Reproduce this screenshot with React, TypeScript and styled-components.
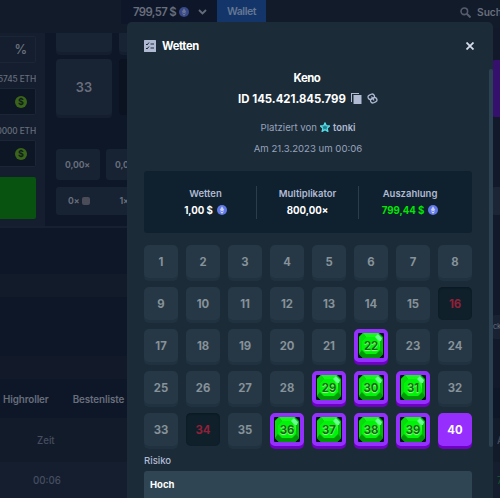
import styled, { createGlobalStyle, css } from 'styled-components';

import { ReactElement } from 'react';

const GlobalStyle = createGlobalStyle`
  * {
    box-sizing: border-box;
  }
  body {
    margin: 0;
    background: #0e1728;
    font-family: Inter, 'Liberation Sans', sans-serif;
    overflow: hidden;
  }
  svg {
    flex-shrink: 0;
  }
`;

const PageDiv = styled.div`
  position: relative;
  width: 500px;
  height: 498px;
  overflow: hidden;
  color: #686e7c;
  white-space: nowrap;
`;

const TopBar = styled.header`
  display: flex;
  height: 33px;
  padding-left: 121px;
  background: #121b2a;
  font-size: 11.3px;
  font-weight: 600;
`;

const BalanceDiv = styled.div`
  display: flex;
  flex-shrink: 0;
  align-items: center;
  width: 96px;
  height: 24px;
  padding-left: 12px;
  background: #0e1729;
  letter-spacing: -0.6px;

  > svg:first-of-type {
    margin: 0 9px 0 3px;
    opacity: 0.5;
  }
`;

const WalletButton = styled.div`
  flex-shrink: 0;
  width: 49px;
  height: 24px;
  background: #13356a;
  color: #657793;
  font-size: 10.6px;
  line-height: 24px;
  text-align: center;
  letter-spacing: -0.5px;
`;

const SearchDiv = styled.div`
  display: flex;
  flex-shrink: 0;
  align-items: center;
  gap: 6px;
  height: 24px;
  margin-left: 194px;
  font-size: 10.2px;
`;

const GameDiv = styled.div`
  display: flex;
  height: 195px;
  border-bottom: 2px solid #162031;
`;

const SidebarDiv = styled.div`
  display: flex;
  flex-direction: column;
  align-items: flex-start;
  width: 45px;
  padding-top: 3px;
  background: #141e2e;
`;

const FieldDiv = styled.div<{ $plain?: boolean }>`
  display: flex;
  align-items: center;
  justify-content: flex-end;
  width: 36px;
  height: 27px;
  padding-right: 8px;
  border: 1px solid #1a2536;
  border-left: 0;
  border-radius: 0 2px 2px 0;
  background: ${({ $plain }) => ($plain ? '#141e2e' : '#0d1625')};
  font-size: 12.5px;
  font-weight: 600;
`;

const FieldLabel = styled.div`
  display: flex;
  justify-content: flex-end;
  width: 36px;
  height: 25px;
  padding-top: 10px;
  font-size: 8.3px;
  font-weight: 500;
  line-height: 12px;
  letter-spacing: -0.1px;
`;

const CoinSpan = styled.span`
  width: 12px;
  height: 12px;
  border-radius: 50%;
  background: #3a6619;
  color: #101d20;
  font-size: 9px;
  font-weight: 700;
  line-height: 12px;
  text-align: center;
`;

const BetButton = styled.div`
  width: 36px;
  height: 42px;
  margin-top: 10px;
  border-radius: 0 2px 2px 0;
  background: #07530f;
`;

const BoardDiv = styled.div`
  flex: 1;
  padding-left: 11px;
  overflow: hidden;
`;

const BoardRow = styled.div<{ $gap: number; $top?: number }>`
  display: flex;
  gap: ${({ $gap }) => $gap}px;
  margin-top: ${({ $top = 0 }) => $top}px;
`;

const BoardTile = styled.div<{ $height?: number; $dark?: boolean }>`
  display: flex;
  align-items: center;
  justify-content: center;
  width: 56px;
  height: ${({ $height = 56 }) => $height}px;
  margin-bottom: 3px;
  border-radius: ${({ $height }) => ($height ? '0 0 4px 4px' : '4px')};
  background: ${({ $dark }) => ($dark ? '#0b1321' : '#182333')};
  box-shadow: ${({ $dark }) => ($dark ? 'none' : '0 3px 0 #141e2f')};
  font-size: 12.8px;
  font-weight: 600;
`;

const OddsDiv = styled.div<{ $width: number; $height: number }>`
  display: flex;
  align-items: center;
  gap: 3px;
  width: ${({ $width }) => $width}px;
  height: ${({ $height }) => $height}px;
  padding-left: ${({ $width }) => ($width > 50 ? 12 : 9)}px;
  border-radius: 3px;
  background: #172232;
  font-size: 8.6px;
  font-weight: 700;
  letter-spacing: -0.1px;
`;

const GemSpan = styled.span`
  width: 8px;
  height: 8px;
  margin-right: 26px;
  border-radius: 2px;
  background: #4a4c58;
`;

const Band = styled.div<{ $height: number; $color?: string }>`
  height: ${({ $height }) => $height}px;
  background: ${({ $color = '#0e1728' }) => $color};
`;

const TabsDiv = styled.div`
  display: flex;
  gap: 24px;
  height: 39px;
  padding-left: 3px;
  font-size: 9.8px;
  font-weight: 600;
  line-height: 41px;
  letter-spacing: -0.08px;
`;

const TableRow = styled.div<{ $height: number; $color: string; $won?: boolean }>`
  display: flex;
  justify-content: space-between;
  height: ${({ $height }) => $height}px;
  padding-left: ${({ $won }) => ($won ? 33 : 37)}px;
  background: ${({ $color }) => $color};
  color: #464d60;
  font-size: 9.7px;
  font-weight: 500;
  line-height: ${({ $height }) => $height + 2}px;

  > :last-child {
    width: 3px;
    color: ${({ $won }) => ($won ? '#10552a' : '#464d60')};
  }
`;

// pieces of the page that stay visible to the right of the dialog
const EdgeDiv = styled.div`
  position: absolute;
  top: 28px;
  right: 0;
  width: 8px;
  height: 360px;
  background: #11192a;
`;

const EdgeBlock = styled.div<{ $height: number; $top: number; $color: string }>`
  height: ${({ $height }) => $height}px;
  margin-top: ${({ $top }) => $top}px;
  padding-left: 1px;
  border-radius: 3px 0 0 3px;
  background: ${({ $color }) => $color};
  font-size: 7.5px;
  line-height: ${({ $height }) => $height}px;
  letter-spacing: -0.3px;
`;

const DialogDiv = styled.div`
  position: absolute;
  top: 22px;
  left: 127px;
  width: 366px;
  height: 476px;
  padding: 0 21px 0 17px;
  border-radius: 5px 5px 0 0;
  background: #1b2c38;
  color: #fff;
`;

const ScrollThumb = styled.div`
  position: absolute;
  top: 47px;
  right: 0;
  width: 4px;
  height: 378px;
  border-radius: 2px;
  background: #2c4252;
`;

const DialogHeader = styled.div`
  display: flex;
  align-items: center;
  height: 48px;
  font-size: 11.2px;
  font-weight: 700;

  > svg:last-child {
    margin: 0 -2px 0 auto;
  }
`;

const TitleSpan = styled.span`
  margin-left: 6px;
  letter-spacing: -0.35px;
`;

const SummaryDiv = styled.div`
  display: flex;
  flex-direction: column;
  align-items: center;
  height: 101px;
`;

const GameTitle = styled.div`
  height: 17px;
  margin-right: 2px;
  font-size: 11.4px;
  font-weight: 700;
  line-height: 17px;
  letter-spacing: -0.45px;
`;

const BetId = styled.div`
  display: flex;
  align-items: center;
  height: 22px;
  padding-top: 1px;
  font-size: 11.4px;
  font-weight: 700;

  > svg {
    margin-left: 5px;
  }
`;

const MetaDiv = styled.div<{ $top: number }>`
  display: flex;
  align-items: center;
  height: 14px;
  margin-top: ${({ $top }) => $top}px;
  color: #98a2bd;
  font-size: 9.6px;

  > svg {
    margin: 0 3px;
  }
`;

const UserSpan = styled.span`
  color: #b1bad3;
  font-weight: 600;
  font-size: 9.4px;
`;

const StatsDiv = styled.div`
  display: flex;
  align-items: center;
  height: 62px;
  border-radius: 3px;
  background: #0f212e;
`;

const StatDiv = styled.div<{ $width: number }>`
  display: flex;
  flex-direction: column;
  align-items: center;
  justify-content: center;
  width: ${({ $width }) => $width}px;
  height: 33px;
  border-left: ${({ $width }) => ($width === 112 ? 0 : 1)}px solid #2b3d4a;
  padding-left: ${({ $width }) => ($width === 112 ? 11 : 0)}px;
  padding-right: ${({ $width }) => ($width > 112 ? 11 : 0)}px;
`;

const StatLabel = styled.div`
  color: #b1bad3;
  font-size: 9.5px;
  font-weight: 600;
  line-height: 16px;
`;

const StatValue = styled.div<{ $won?: boolean }>`
  display: flex;
  align-items: center;
  gap: 4px;
  height: 19px;
  color: ${({ $won }) => ($won ? '#00e701' : '#fff')};
  font-size: 9.7px;
  font-weight: 700;
  letter-spacing: -0.05px;
`;

const GridDiv = styled.div`
  display: grid;
  grid-template-columns: repeat(8, 34px);
  grid-auto-rows: 34px;
  gap: 8px;
  margin-top: 12px;
`;

type TileKind = 'idle' | 'miss' | 'hit' | 'picked';

const tileStyles = {
  idle: css`
    background: #263845;
    box-shadow: 0 3px 0 #20323f;
    color: #87929a;
  `,
  miss: css`
    background: #0f202b;
    box-shadow: inset 0 1px 2px #0a1822;
    color: #912039;
  `,
  hit: css`
    border: 4px solid #9430fc;
    background: #04141e;
    box-shadow: 0 3px 0 #7100c7;
    color: #116813;
    text-shadow: 0 1px 1px #b0ff9c;
  `,
  picked: css`
    background: #962efe;
    box-shadow: 0 3px 0 #7100c7;
    color: #fff;
  `,
};

const TileDiv = styled.div<{ $kind: TileKind }>`
  display: flex;
  position: relative;
  align-items: center;
  justify-content: center;
  height: 33px;
  border-radius: 5px;
  font-size: 11.3px;
  font-weight: 700;
  ${({ $kind }) => tileStyles[$kind]}

  > svg {
    position: absolute;
    top: 0;
    left: 1px;
  }
  > span {
    position: relative;
  }
`;

const RiskLabel = styled.div`
  height: 19px;
  margin-top: 5px;
  color: #b1bad3;
  font-size: 9.6px;
  font-weight: 500;
  line-height: 18px;
`;

const RiskSelect = styled.div`
  height: 30px;
  padding-left: 6px;
  border-radius: 3px 3px 0 0;
  background: #2f4553;
  font-size: 9.5px;
  font-weight: 700;
  line-height: 28px;
`;

function EthIcon(): ReactElement {
  return (
    <svg width="10" height="10" viewBox="0 0 20 20">
      <circle cx="10" cy="10" r="10" fill="#6179e8" />
      <path d="M10 2.5 5.5 10.2 10 13Z" fill="#c4cefa" />
      <path d="M10 2.5 14.5 10.2 10 13Z" fill="#fff" opacity=".65" />
      <path d="M5.5 11.8 10 17.5 14.5 11.8 10 14.5Z" fill="#dce3ff" />
    </svg>
  );
}

function ListIcon(): ReactElement {
  return (
    <svg width="12" height="12" viewBox="0 0 24 24">
      <rect width="24" height="24" rx="1" fill="#b1bad3" />
      <g fill="none" stroke="#1b2c38" strokeWidth="2">
        <path d="m4 8 2 2 4-5M4 16l2 2 4-5M13 8h7M13 16h7" />
      </g>
    </svg>
  );
}

function CopyIcon(): ReactElement {
  return (
    <svg width="11" height="11" viewBox="0 0 22 22" fill="#b1bad3">
      <path d="M0 0h16v2H2v16H0Z" />
      <rect x="5" y="4" width="16" height="18" />
    </svg>
  );
}

function LinkIcon(): ReactElement {
  return (
    <svg width="11" height="11" viewBox="0 0 22 22" fill="none" stroke="#b1bad3" strokeWidth="2.5">
      <rect x="2" y="3" width="13" height="9" rx="4.500" transform="rotate(-25 8.500 7.500)" />
      <rect x="7" y="10" width="13" height="9" rx="4.500" transform="rotate(-25 13.500 14.500)" />
      <path d="m9 7 5 8" />
    </svg>
  );
}

function StarIcon(): ReactElement {
  return (
    <svg width="10" height="10" viewBox="0 0 24 24">
      <path
        d="m12 2 3 7 8 .5-6 5.5 2 7.5-7-4-7 4L7 15 1 9.500l8-.5Z"
        fill="#2a9aab"
        stroke="#57dce5"
        strokeWidth="3"
        strokeLinejoin="round"
      />
      <path d="M9 11v5M12 10v6M15 11v5" stroke="#1a5366" strokeWidth="1.5" />
    </svg>
  );
}

function GemIcon(): ReactElement {
  return (
    <svg width="24" height="25" viewBox="0 0 24 25">
      <path d="M4 0h16l4 4v17l-4 4H4l-4-4V4Z" fill="#00bd08" />
      <path d="M4 0h16l-3 4H7Z" fill="#18f71b" />
      <path d="m0 4 4-4 3 4-4 4v9l-3 4Z" fill="#08dd0c" />
      <path d="m0 21 3-4 4 4h10l4-4 3 4-4 4H4Z" fill="#009a08" />
      <path d="M7 4h10l4 4v9l-4 4H7l-4-4V8Z" fill="#00f408" />
      <path d="m17 4 4 4v7Z" fill="#29ff27" />
      <path d="m19 1 4 4-1 3h-2l-4-4Z" fill="#6bff93" />
    </svg>
  );
}

const hits = [22, 29, 30, 31, 36, 37, 38, 39];
const misses = [16, 34];

function getKind(n: number): TileKind {
  if (hits.includes(n)) return 'hit';
  if (misses.includes(n)) return 'miss';
  return n === 40 ? 'picked' : 'idle';
}

function Tile({ n }: { n: number }): ReactElement {
  const kind = getKind(n);
  return (
    <TileDiv $kind={kind}>
      {kind === 'hit' && <GemIcon />}
      <span>{n}</span>
    </TileDiv>
  );
}

function Background(): ReactElement {
  return (
    <>
      <TopBar>
        <BalanceDiv>
          799,57 $
          <EthIcon />
          <svg width="9" height="6" viewBox="0 0 9 6" fill="none" stroke="#646b79" strokeWidth="1.8">
            <path d="m1 1 3.500 3.500L8 1" />
          </svg>
        </BalanceDiv>
        <WalletButton>Wallet</WalletButton>
        <SearchDiv>
          <svg width="11" height="11" viewBox="0 0 11 11" fill="none" stroke="#555c6b">
            <circle cx="4.300" cy="4.300" r="3.300" strokeWidth="1.600" />
            <path d="m6.500 6.500 4 4" strokeWidth="2" />
          </svg>
          Suche
        </SearchDiv>
      </TopBar>
      <GameDiv>
        <SidebarDiv>
          <FieldDiv $plain>%</FieldDiv>
          <FieldLabel>5745 ETH</FieldLabel>
          <FieldDiv>
            <CoinSpan>$</CoinSpan>
          </FieldDiv>
          <FieldLabel>0000 ETH</FieldLabel>
          <FieldDiv>
            <CoinSpan>$</CoinSpan>
          </FieldDiv>
          <BetButton />
        </SidebarDiv>
        <BoardDiv>
          <BoardRow $gap={7}>
            <BoardTile $height={19} />
            <BoardTile $height={19} />
          </BoardRow>
          <BoardRow $gap={7} $top={4}>
            <BoardTile>33</BoardTile>
            <BoardTile $dark />
          </BoardRow>
          <BoardRow $gap={6} $top={31}>
            <OddsDiv $width={44} $height={31}>0,00×</OddsDiv>
            <OddsDiv $width={44} $height={31}>0,00×</OddsDiv>
          </BoardRow>
          <BoardRow $gap={0} $top={7}>
            <OddsDiv $width={300} $height={28}>
              0×
              <GemSpan />
              1×
            </OddsDiv>
          </BoardRow>
        </BoardDiv>
      </GameDiv>
      <Band $height={46} />
      <Band $height={23} $color="#121b29" />
      <Band $height={59} />
      <Band $height={23} $color="#121a29" />
      <TabsDiv>
        <span>Highroller</span>
        <span>Bestenliste</span>
      </TabsDiv>
      <TableRow $height={44} $color="#121b2a">
        <span>Zeit</span>
        <span>A</span>
      </TableRow>
      <TableRow $height={36} $color="#141e2f" $won>
        <span>00:06</span>
        <span>7</span>
      </TableRow>
      <EdgeDiv>
        <EdgeBlock $height={57} $top={32} $color="#35106c" />
        <EdgeBlock $height={28} $top={70} $color="#1b2536" />
        <EdgeBlock $height={24} $top={100} $color="#182233">ck</EdgeBlock>
      </EdgeDiv>
    </>
  );
}

export default function App(): ReactElement {
  return (
    <PageDiv>
      <GlobalStyle />
      <Background />
      <DialogDiv>
        <ScrollThumb />
        <DialogHeader>
          <ListIcon />
          <TitleSpan>Wetten</TitleSpan>
          <svg width="8" height="8" viewBox="0 0 8 8" stroke="#d5dceb" strokeWidth="1.800">
            <path d="m.5.5 7 7M7.500.5l-7 7" />
          </svg>
        </DialogHeader>
        <SummaryDiv>
          <GameTitle>Keno</GameTitle>
          <BetId>
            ID 145.421.845.799
            <CopyIcon />
            <LinkIcon />
          </BetId>
          <MetaDiv $top={11}>
            Platziert von
            <StarIcon />
            <UserSpan>tonki</UserSpan>
          </MetaDiv>
          <MetaDiv $top={7}>Am 21.3.2023 um 00:06</MetaDiv>
        </SummaryDiv>
        <StatsDiv>
          <StatDiv $width={112}>
            <StatLabel>Wetten</StatLabel>
            <StatValue>
              1,00 $
              <EthIcon />
            </StatValue>
          </StatDiv>
          <StatDiv $width={102}>
            <StatLabel>Multiplikator</StatLabel>
            <StatValue>800,00×</StatValue>
          </StatDiv>
          <StatDiv $width={114}>
            <StatLabel>Auszahlung</StatLabel>
            <StatValue $won>
              799,44 $
              <EthIcon />
            </StatValue>
          </StatDiv>
        </StatsDiv>
        <GridDiv>
          {Array.from({ length: 40 }, (_, i) => (
            <Tile key={i} n={i + 1} />
          ))}
        </GridDiv>
        <RiskLabel>Risiko</RiskLabel>
        <RiskSelect>Hoch</RiskSelect>
      </DialogDiv>
    </PageDiv>
  );
}
